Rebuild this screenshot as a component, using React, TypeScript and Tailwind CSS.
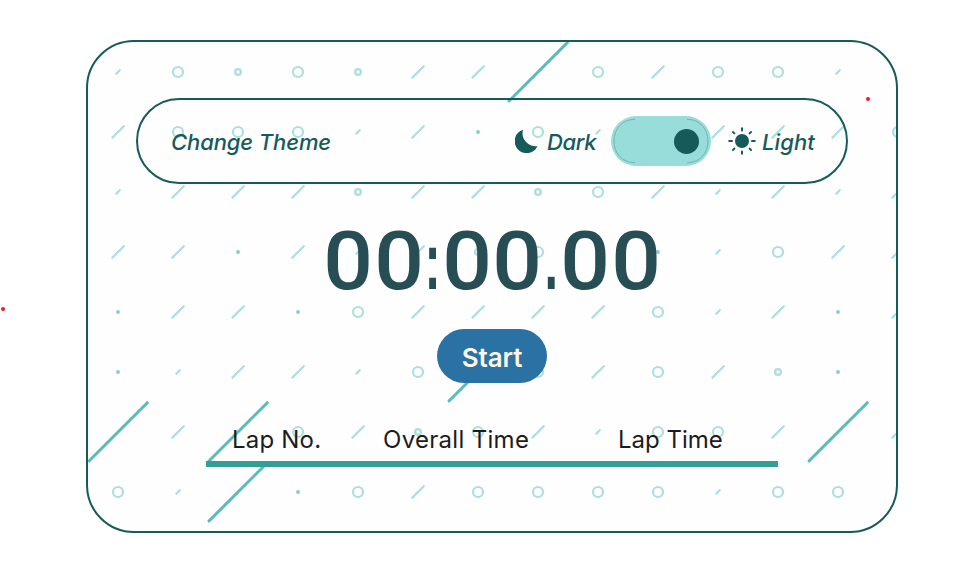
import React from "react";

// One character per 60px tile: O ring, o small ring, / slash, s tick, . dot, L long slash
const rows = [
  "sOoOo//LO/OOs ",
  "/OOOs/.Os ///O",
  "s///o//oO/s/s/",
  "//./s/oOs.sO//",
  ".//.O////Os/./",
  ".s//sOLO/O/o. ",
  "L/LO/oO/sOO/L/",
  "OsL.O/OOOOsOO ",
];

function Mark({ kind, x, y }: { kind: string; x: number; y: number }) {
  switch (kind) {
    case "O":
      return <circle cx={x} cy={y} r={5} />;
    case "o":
      return <circle cx={x} cy={y} r={2.9} strokeWidth={2.3} />;
    case ".":
      return <circle cx={x} cy={y} r={1.9} fill="#80cfcd" stroke="none" />;
    case "/":
      return <path d={`M${x - 5.6} ${y + 5.6}L${x + 5.8} ${y - 5.8}`} />;
    case "s":
      return <path d={`M${x - 1.6} ${y + 1.6}L${x + 1.8} ${y - 1.8}`} />;
    case "L":
      return <path d={`M${x - 29} ${y + 29}L${x + 29.3} ${y - 29.3}`} stroke="#56bcbc" strokeWidth={3} />;
    default:
      return null;
  }
}

function Pattern() {
  return (
    <svg className="pointer-events-none absolute inset-0 size-full" viewBox="0 0 808 489" fill="none" stroke="#addfdd" strokeWidth={2.2} strokeLinecap="round" aria-hidden="true">
      {rows.map((row, j) =>
        [...row].map((kind, i) => <Mark key={`${i}-${j}`} kind={kind} x={30 + i * 60} y={30 + j * 60} />),
      )}
    </svg>
  );
}

function Moon() {
  return (
    <svg className="size-6 shrink-0" viewBox="0 0 24 24" fill="#175a5a">
      <path d="M8 0.7A12 12 0 1 0 22.6 17A13 13 0 0 1 8 0.7Z" />
    </svg>
  );
}

function Sun() {
  return (
    <svg className="size-7 shrink-0" viewBox="0 0 28 28" stroke="#175a5a" strokeWidth={2} strokeLinecap="round">
      <circle cx="14" cy="14" r="7" fill="#175a5a" stroke="none" />
      <path d="M14 1.2v2.3M14 24.5v2.3M1.2 14h2.8M24 14h2.8M5 5l1.4 1.4M21.6 21.6L23 23M5 23l1.4-1.4M21.6 6.4L23 5" />
    </svg>
  );
}

function Toggle() {
  return (
    <button aria-label="Theme" className="relative flex h-[50px] w-[100px] shrink-0 items-center justify-end rounded-full bg-[#98ddd9] pr-3">
      <svg className="absolute inset-0 size-full" viewBox="0 0 100 50" fill="none" stroke="#69a9a8" strokeWidth={0.8}>
        <path d="M24 3.3C11 3.3 3 13 3 25s8 21.7 21 21.7M76 3.3C89 3.3 97 13 97 25s-8 21.7-21 21.7" />
      </svg>
      <span className="size-[25px] rounded-full bg-[#175a5a]" />
    </button>
  );
}

function Timer({ value }: { value: string }) {
  return (
    <div className="mt-[34px] flex h-[84px] items-baseline justify-center text-[81px] font-medium leading-[86px] text-[#274e55]">
      {[...value].map((char, i) =>
        char === "0" ? (
          <span key={i} className="flex w-[50.6px] justify-center font-['Roboto',sans-serif]">
            <span className="block scale-x-108">{char}</span>
          </span>
        ) : (
          <span key={i} className="flex w-[17.4px] justify-center font-['Liberation_Sans',sans-serif] font-bold">
            <span className="block scale-x-60">{char}</span>
          </span>
        ),
      )}
    </div>
  );
}

export default function App() {
  return (
    <main className="relative h-[569px] w-[969px] overflow-hidden bg-white pl-[86px] pt-10 font-['Inter',sans-serif]">
      <section className="relative h-[493px] w-[812px] overflow-hidden rounded-[48px] border-2 border-[#175a5a] bg-[#fefefe]">
        <Pattern />
        <div className="relative flex flex-col items-center pt-14">
          <header className="flex h-[86px] w-[712px] items-center rounded-full border-2 border-[#175a5a] pl-[33px] text-[22px] font-medium italic text-[#175a5a]">
            <span className="w-[344px] whitespace-nowrap pt-[2px] tracking-[-0.1px]">Change Theme</span>
            <Moon />
            <span className="ml-2 w-[64px] pt-[2px] tracking-[-0.4px]">Dark</span>
            <Toggle />
            <span className="ml-[17px]"><Sun /></span>
            <span className="ml-[6px] pt-[2px] tracking-[0.1px]">Light</span>
          </header>
          <Timer value="00:00.00" />
          <button className="mt-[27px] h-[54px] w-[110px] rounded-full bg-[#2972a3] pt-[3px] text-[26px] font-semibold leading-none tracking-[-0.1px] text-[#faf6e8]">Start</button>
          <div className="mt-[38px] flex h-[46px] w-[572px] border-b-[6px] border-[#339e98] pl-[26px] text-[24px] leading-[38px] text-[#1c1c1c]">
            <span className="w-[151px] whitespace-nowrap tracking-[0.2px]">Lap No.</span>
            <span className="w-[235px] whitespace-nowrap tracking-[0.3px]">Overall Time</span>
            <span className="whitespace-nowrap">Lap Time</span>
          </div>
        </div>
      </section>
      <span className="absolute left-[866px] top-[97px] size-1 rounded-full bg-[#ed1c24]" />
      <span className="absolute left-[1px] top-[307px] size-1 rounded-full bg-[#ed1c24]" />
    </main>
  );
}
